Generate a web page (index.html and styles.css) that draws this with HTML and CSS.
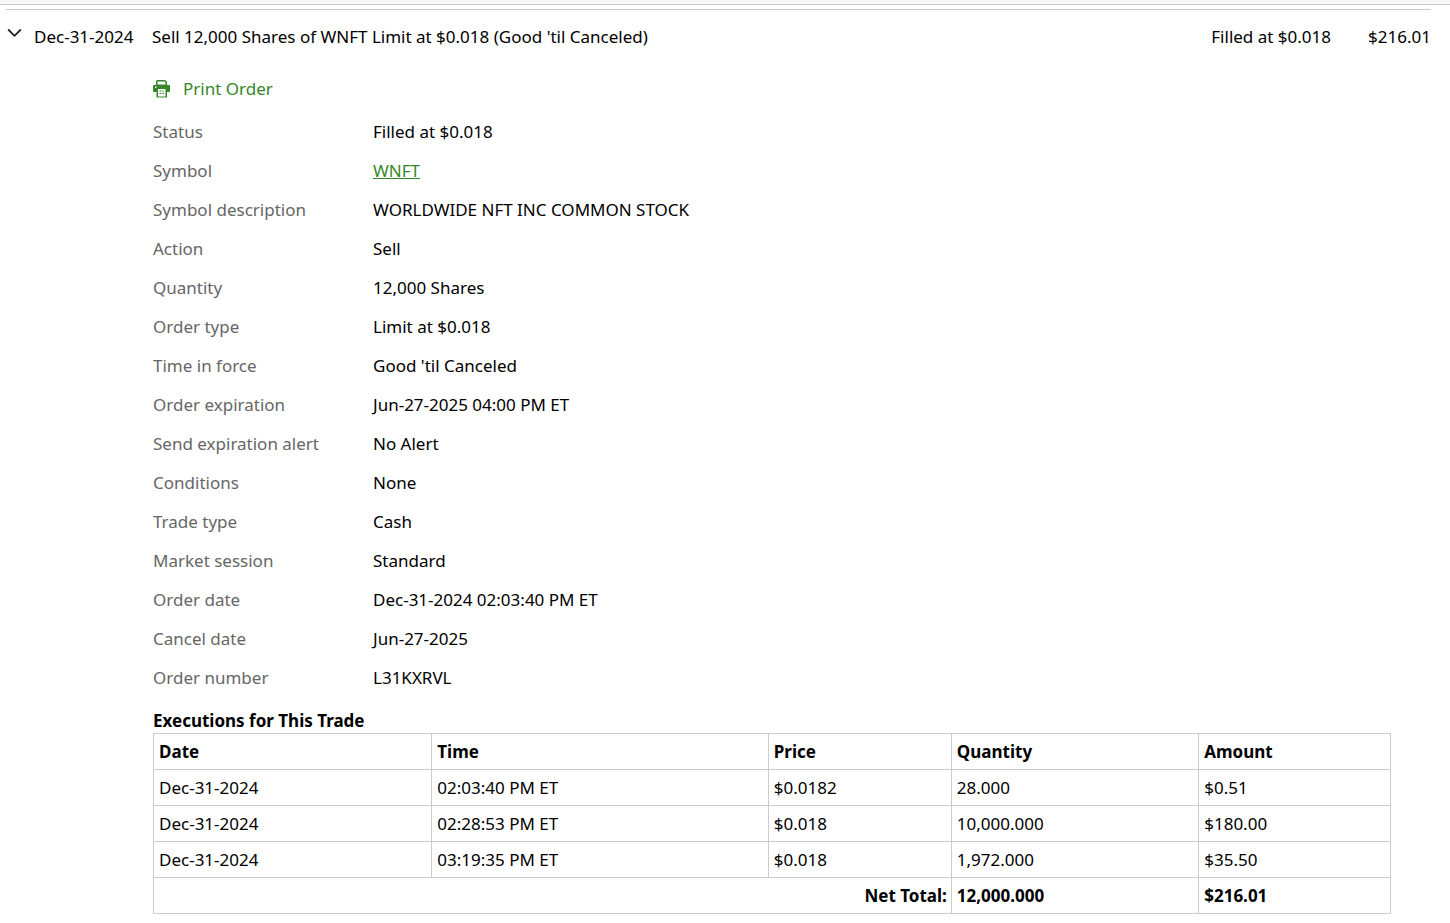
FILE: index.html
```
<!DOCTYPE html>
<html lang="en">

<head>
    <meta charset="UTF-8">
    <meta name="viewport" content="width=device-width, initial-scale=1.0">
    <title>Order Details</title>
    <link rel="stylesheet" href="styles.css">
</head>

<body>
    <div class="top-strip"></div>

    <main class="order">
        <div class="order-header">
            <button type="button" class="toggle" id="toggle" aria-expanded="true" aria-controls="order-body" aria-label="Toggle order details">
                <svg width="15" height="10" viewBox="0 0 15 10" fill="none" stroke="#222" stroke-width="1.8">
                    <path d="M1.2 1.5 L7.5 7.8 L13.8 1.5" />
                </svg>
            </button>
            <span class="order-day">Dec-31-2024</span>
            <span class="order-title">Sell 12,000 Shares of WNFT Limit at $0.018 (Good 'til Canceled)</span>
            <span class="order-status">Filled at $0.018</span>
            <span class="order-amount">$216.01</span>
        </div>

        <div class="order-body" id="order-body">
            <button type="button" class="print" onclick="window.print()">
                <svg width="17" height="18" viewBox="0 0 17 18">
                    <path fill="#368727" fill-rule="evenodd" d="M4 0H12L14 2V5H16Q17 5 17 6V11Q17 12 16 12H14V17.500H3.500V12H1Q0 12 0 11V6Q0 5 1 5H3V1ZM4.500 1.500V4.500H12.500V2.500L11.500 1.500ZM5 9V16.500H12.500V9ZM2 6.500V8H3.500V6.500Z" />
                    <path stroke="#368727" stroke-width="1" d="M6.500 11H8.500M9.500 11H11M6.500 13.500H8.500M9.500 13.500H11" />
                </svg>
                Print Order
            </button>

            <dl class="info">
                <dt>Status</dt>
                <dd>Filled at $0.018</dd>
                <dt>Symbol</dt>
                <dd><a href="#">WNFT</a></dd>
                <dt>Symbol description</dt>
                <dd>WORLDWIDE NFT INC COMMON STOCK</dd>
                <dt>Action</dt>
                <dd>Sell</dd>
                <dt>Quantity</dt>
                <dd>12,000 Shares</dd>
                <dt>Order type</dt>
                <dd>Limit at $0.018</dd>
                <dt>Time in force</dt>
                <dd>Good 'til Canceled</dd>
                <dt>Order expiration</dt>
                <dd>Jun-27-2025 04:00 PM ET</dd>
                <dt>Send expiration alert</dt>
                <dd>No Alert</dd>
                <dt>Conditions</dt>
                <dd>None</dd>
                <dt>Trade type</dt>
                <dd>Cash</dd>
                <dt>Market session</dt>
                <dd>Standard</dd>
                <dt>Order date</dt>
                <dd>Dec-31-2024 02:03:40 PM ET</dd>
                <dt>Cancel date</dt>
                <dd>Jun-27-2025</dd>
                <dt>Order number</dt>
                <dd>L31KXRVL</dd>
            </dl>

            <!-- Executions table -->
            <table class="executions">
                <caption>Executions for This Trade</caption>
                <colgroup>
                    <col class="col-date">
                    <col class="col-time">
                    <col class="col-price">
                    <col class="col-quantity">
                    <col class="col-amount">
                </colgroup>
                <thead>
                    <tr>
                        <th>Date</th>
                        <th>Time</th>
                        <th>Price</th>
                        <th>Quantity</th>
                        <th>Amount</th>
                    </tr>
                </thead>
                <tbody>
                    <tr>
                        <td>Dec-31-2024</td>
                        <td>02:03:40 PM ET</td>
                        <td>$0.0182</td>
                        <td>28.000</td>
                        <td>$0.51</td>
                    </tr>
                    <tr>
                        <td>Dec-31-2024</td>
                        <td>02:28:53 PM ET</td>
                        <td>$0.018</td>
                        <td>10,000.000</td>
                        <td>$180.00</td>
                    </tr>
                    <tr>
                        <td>Dec-31-2024</td>
                        <td>03:19:35 PM ET</td>
                        <td>$0.018</td>
                        <td>1,972.000</td>
                        <td>$35.50</td>
                    </tr>
                </tbody>
                <tfoot>
                    <tr>
                        <th colspan="3" class="net-total">Net Total:</th>
                        <th>12,000.000</th>
                        <th>$216.01</th>
                    </tr>
                </tfoot>
            </table>
        </div>
    </main>

    <script>
        // Show or hide the order details
        document.getElementById('toggle').addEventListener('click', function () {
            const body = document.getElementById('order-body');
            body.hidden = !body.hidden;
            this.setAttribute('aria-expanded', String(!body.hidden));
        });
    </script>
</body>

</html>
```

FILE: styles.css
```
* {
    box-sizing: border-box;
}

body {
    margin: 0;
    background-color: #fff;
    color: #000;
    font-family: "Noto Sans", "Open Sans", sans-serif;
    font-size: 17px;
    line-height: 24px;
}

.top-strip {
    height: 5px;
    background-color: #f7f7f9;
    border-bottom: 1px solid #ccc;
}

.order {
    margin: 4px 19px 0 6px;
    border-top: 1px solid #ccc;
}

.order-header {
    display: flex;
    align-items: flex-start;
    padding-top: 15px;
}

button {
    padding: 0;
    border: none;
    background: none;
    font: inherit;
    cursor: pointer;
}

.toggle {
    display: flex;
    width: 28px;
    padding: 3px 1px;
}

.order-day {
    width: 118px;
}

.order-title {
    flex: 1;
}

.order-amount {
    width: 100px;
    text-align: right;
}

.order-body {
    padding: 28px 40px 0 147px;
}

.print {
    display: flex;
    align-items: center;
    gap: 13px;
    color: #368727;
}

.info {
    display: grid;
    grid-template-columns: 220px 1fr;
    row-gap: 15px;
    margin: 19px 0;
}

.info dt {
    color: #666;
}

.info dd {
    margin: 0;
}

.info a {
    color: #368727;
}

.executions {
    width: 100%;
    table-layout: fixed;
    border-collapse: collapse;
}

.executions caption {
    font-weight: bold;
    text-align: left;
}

.executions th,
.executions td {
    border: 1px solid #ccc;
    padding: 6px 4px 5px 5px;
    text-align: left;
}

.executions .net-total {
    text-align: right;
}

.col-date {
    width: 22.5%;
}

.col-time {
    width: 27.2%;
}

.col-price {
    width: 14.8%;
}

.col-quantity {
    width: 20%;
}

.col-amount {
    width: 15.5%;
}
```
